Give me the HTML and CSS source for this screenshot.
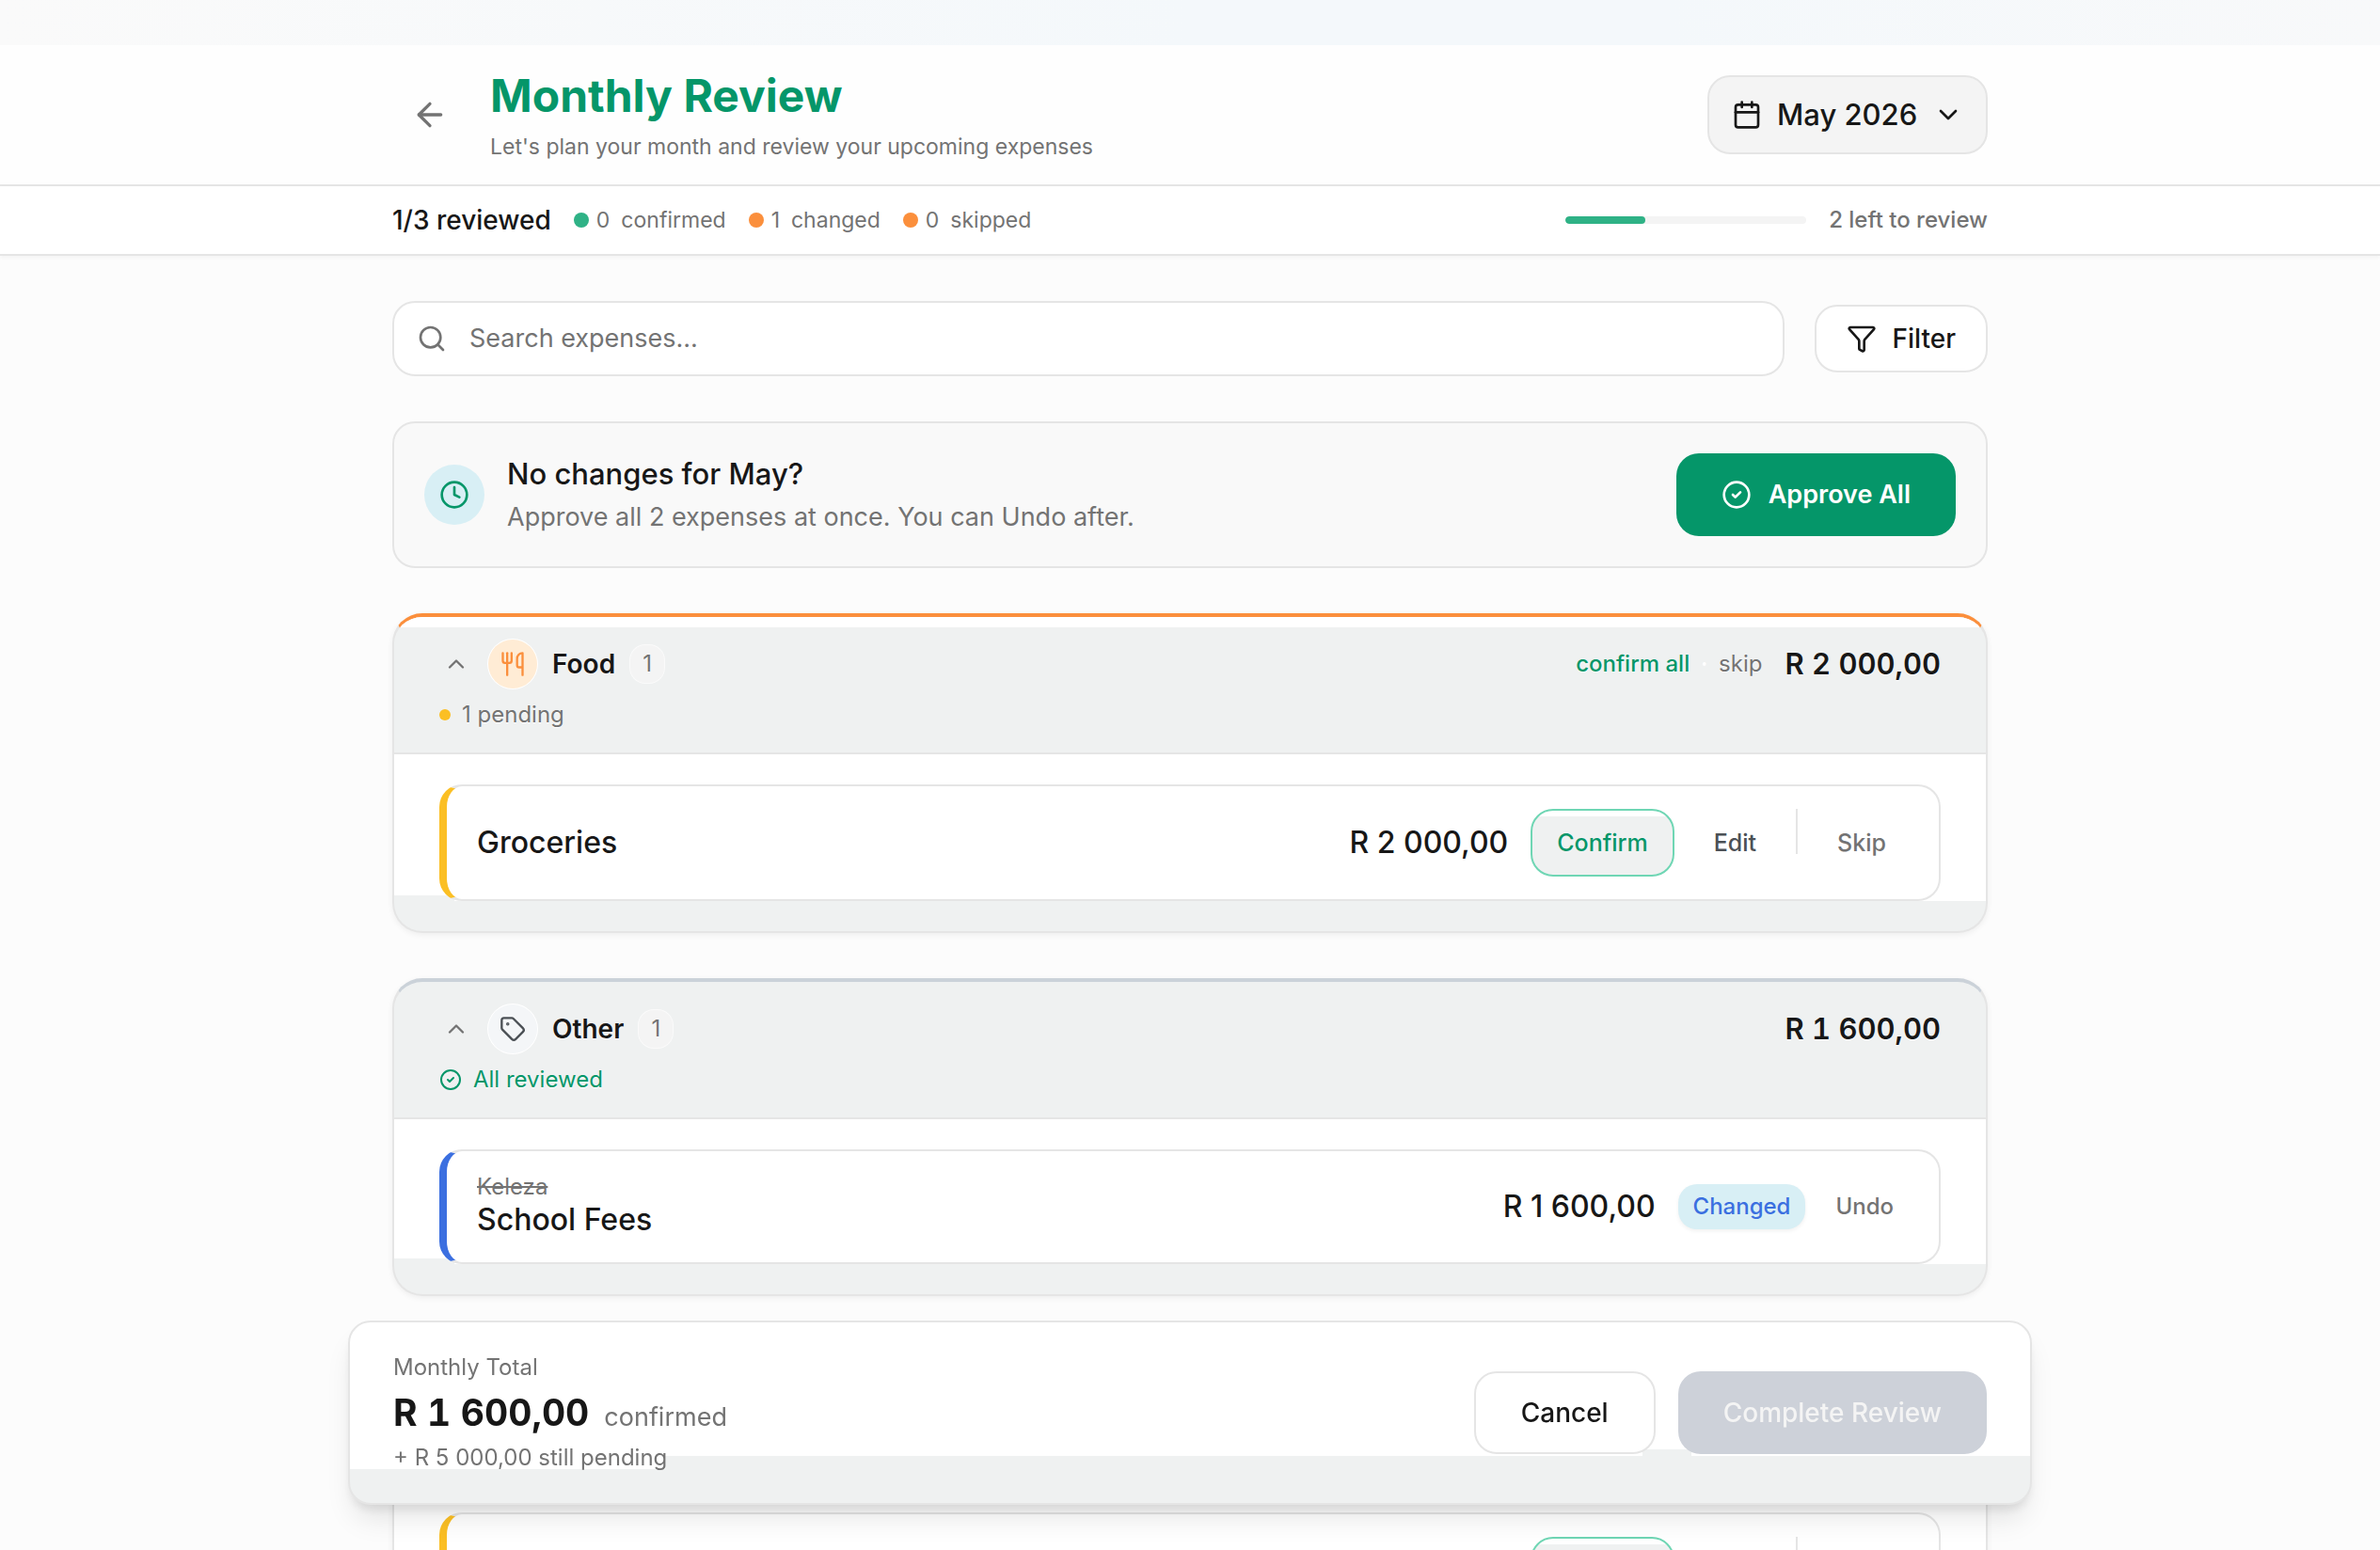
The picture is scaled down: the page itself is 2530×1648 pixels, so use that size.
FILE: index.html
```html
<!DOCTYPE html>
<html lang="en">
<head>
    <meta charset="UTF-8">
    <meta name="viewport" content="width=device-width, initial-scale=1.0">
    <title>Monthly Review</title>
    <link rel="stylesheet" href="styles.css">
</head>
<body>
    <div class="page">
        <header class="page-header">
            <div class="container header-inner">
                <button type="button" class="back-btn" aria-label="Back">
                    <svg class="icon icon-lg" viewBox="0 0 24 24"><path d="m12 19-7-7 7-7"/><path d="M19 12H5"/></svg>
                </button>
                <div class="header-text">
                    <h1>Monthly Review</h1>
                    <p>Let's plan your month and review your upcoming expenses</p>
                </div>
                <div class="month-picker">
                    <svg class="icon" viewBox="0 0 24 24"><path d="M8 2v4"/><path d="M16 2v4"/><rect width="18" height="18" x="3" y="4" rx="2"/><path d="M3 10h18"/></svg>
                    <select aria-label="Month">
                        <option>May 2026</option>
                    </select>
                    <svg class="icon" viewBox="0 0 24 24"><path d="m6 9 6 6 6-6"/></svg>
                </div>
            </div>
        </header>

        <div class="stats-bar">
            <div class="container stats-inner">
                <strong class="stats-total">1/3 reviewed</strong>
                <span class="stat"><i class="dot dot-green"></i><span>0</span><span>confirmed</span></span>
                <span class="stat"><i class="dot dot-orange"></i><span>1</span><span>changed</span></span>
                <span class="stat"><i class="dot dot-orange"></i><span>0</span><span>skipped</span></span>
                <div class="progress"><div class="progress-fill" style="width: 33%"></div></div>
                <span class="stats-left">2 left to review</span>
            </div>
        </div>

        <main class="container content">
            <div class="toolbar">
                <div class="search-box">
                    <svg class="icon" viewBox="0 0 24 24"><circle cx="11" cy="11" r="8"/><path d="m21 21-4.3-4.3"/></svg>
                    <input type="text" placeholder="Search expenses..." aria-label="Search expenses">
                </div>
                <button type="button" class="btn btn-outline btn-filter">
                    <svg class="icon" viewBox="0 0 24 24"><path d="M10 20a1 1 0 0 0 .553.895l2 1A1 1 0 0 0 14 21v-7a2 2 0 0 1 .517-1.341L21.74 4.67A1 1 0 0 0 21 3H3a1 1 0 0 0-.742 1.67l7.225 7.989A2 2 0 0 1 10 14z"/></svg>
                    Filter
                </button>
            </div>

            <section class="approve-banner">
                <span class="banner-icon">
                    <svg class="icon" viewBox="0 0 24 24"><circle cx="12" cy="12" r="10"/><path d="M12 6v6l4 2"/></svg>
                </span>
                <div class="banner-text">
                    <h2>No changes for May?</h2>
                    <p>Approve all 2 expenses at once. You can Undo after.</p>
                </div>
                <button type="button" class="btn btn-primary">
                    <svg class="icon" viewBox="0 0 24 24"><circle cx="12" cy="12" r="10"/><path d="m9 12 2 2 4-4"/></svg>
                    Approve All
                </button>
            </section>

            <section class="category category-food">
                <div class="category-header">
                    <div class="category-row">
                        <button type="button" class="toggle-btn" aria-label="Collapse Food">
                            <svg class="icon icon-md" viewBox="0 0 24 24"><path d="m18 15-6-6-6 6"/></svg>
                        </button>
                        <span class="category-icon">
                            <svg class="icon icon-md" viewBox="0 0 24 24"><path d="M3 2v7c0 1.1.9 2 2 2h4a2 2 0 0 0 2-2V2"/><path d="M7 2v20"/><path d="M21 15V2a5 5 0 0 0-5 5v6c0 1.1.9 2 2 2h3Zm0 0v7"/></svg>
                        </span>
                        <h3>Food</h3>
                        <span class="count">1</span>
                        <div class="category-actions">
                            <button type="button" class="text-btn text-btn-green">confirm all</button>
                            <span class="separator">·</span>
                            <button type="button" class="text-btn">skip</button>
                        </div>
                        <span class="category-total">R 2 000,00</span>
                    </div>
                    <div class="category-status"><i class="dot dot-pending"></i>1 pending</div>
                </div>
                <div class="category-body">
                    <div class="expense expense-pending">
                        <div class="expense-name">Groceries</div>
                        <span class="expense-amount">R 2 000,00</span>
                        <button type="button" class="row-btn row-btn-confirm">Confirm</button>
                        <button type="button" class="row-btn row-btn-edit">Edit</button>
                        <span class="divider"></span>
                        <button type="button" class="row-btn row-btn-skip">Skip</button>
                    </div>
                </div>
            </section>

            <section class="category category-other">
                <div class="category-header">
                    <div class="category-row">
                        <button type="button" class="toggle-btn" aria-label="Collapse Other">
                            <svg class="icon icon-md" viewBox="0 0 24 24"><path d="m18 15-6-6-6 6"/></svg>
                        </button>
                        <span class="category-icon">
                            <svg class="icon icon-md" viewBox="0 0 24 24"><path d="M12.586 2.586A2 2 0 0 0 11.172 2H4a2 2 0 0 0-2 2v7.172a2 2 0 0 0 .586 1.414l8.704 8.704a2.426 2.426 0 0 0 3.42 0l6.58-6.58a2.426 2.426 0 0 0 0-3.42z"/><circle cx="7.5" cy="7.5" r=".5" fill="currentColor"/></svg>
                        </span>
                        <h3>Other</h3>
                        <span class="count">1</span>
                        <span class="category-total">R 1 600,00</span>
                    </div>
                    <div class="category-status status-done">
                        <svg class="icon icon-sm" viewBox="0 0 24 24"><circle cx="12" cy="12" r="10"/><path d="m9 12 2 2 4-4"/></svg>
                        All reviewed
                    </div>
                </div>
                <div class="category-body">
                    <div class="expense expense-changed">
                        <div class="expense-name">
                            <del>Keleza</del>
                            School Fees
                        </div>
                        <span class="expense-amount">R 1 600,00</span>
                        <span class="badge">Changed</span>
                        <button type="button" class="row-btn row-btn-undo">Undo</button>
                    </div>
                </div>
            </section>

            <section class="category category-other">
                <div class="category-header"></div>
                <div class="category-body">
                    <div class="expense expense-pending">
                        <div class="expense-name"></div>
                        <button type="button" class="row-btn row-btn-confirm">Confirm</button>
                        <button type="button" class="row-btn row-btn-edit">Edit</button>
                        <span class="divider"></span>
                        <button type="button" class="row-btn row-btn-skip">Skip</button>
                    </div>
                </div>
            </section>
        </main>

        <footer class="summary-bar">
            <div class="summary-text">
                <p>Monthly Total</p>
                <p class="summary-amount"><strong>R 1 600,00</strong><span>confirmed</span></p>
                <p>+ R 5 000,00 still pending</p>
            </div>
            <button type="button" class="btn btn-outline">Cancel</button>
            <button type="button" class="btn btn-complete" disabled>Complete Review</button>
        </footer>
    </div>
</body>
</html>
```
FILE: styles.css
```css
* { box-sizing: border-box; }
body { font-family: Inter, 'Liberation Sans', sans-serif; font-size: 24px; line-height: 32px; color: #171717; background: #fcfcfc; margin: 0; }
h1, h2, h3, p { margin: 0; }
button, input, select { font: inherit; color: inherit; }
button { display: inline-flex; align-items: center; justify-content: center; border: none; background: none; padding: 0; cursor: pointer; }

.page { height: 100vh; overflow: hidden; padding-top: 48px; background: linear-gradient(90deg, #fafafa, #f4f8fb 50%, #f4f8fb 70%, #f8f9fa) top / 100% 48px no-repeat; }
.container { max-width: 1696px; margin: 0 auto; }

/* Icons */
.icon { width: 32px; height: 32px; flex: none; fill: none; stroke: currentColor; stroke-width: 2; stroke-linecap: round; stroke-linejoin: round; }
.icon-lg { width: 40px; height: 40px; }
.icon-md { width: 28px; height: 28px; }
.icon-sm { width: 24px; height: 24px; }

/* Header */
.page-header { background: #fefefe; border-bottom: 2px solid #e5e5e5; }
.header-inner { display: flex; align-items: center; min-height: 148px; }
.back-btn { width: 80px; height: 80px; margin-right: 24px; color: #737373; }
.header-text { flex: 1; font-size: 23px; color: #737373; }
.header-text h1 { font-size: 48px; line-height: 60px; font-weight: 700; color: #059669; margin-bottom: 8px; }
.month-picker { display: flex; align-items: center; height: 84px; padding: 0 24px; border: 2px solid #e5e5e5; border-radius: 24px; background: #f4f4f4; }
.month-picker select { appearance: none; border: none; background: none; margin: 0 16px; padding: 0; font-size: 31px; line-height: 40px; font-weight: 500; }

/* Progress strip */
.stats-bar { background: #fff; border-bottom: 2px solid #e5e5e5; box-shadow: 0 2px 4px rgba(0,0,0,0.04); }
.stats-inner { display: flex; align-items: center; min-height: 72px; color: #737373; }
.stats-total { font-size: 28px; font-weight: 500; color: #171717; }
.stat { display: flex; align-items: center; gap: 8px; margin-left: 24px; font-size: 23px; }
.stat span + span { margin-left: 4px; }
.dot { width: 16px; height: 16px; border-radius: 50%; flex: none; }
.dot-green { background: #2fb286; }
.dot-orange { background: #fb8f3c; }
.dot-pending { width: 12px; height: 12px; background: #fbbf24; }
.progress { width: 256px; height: 8px; margin-left: auto; border-radius: 4px; background: #f4f4f4; overflow: hidden; }
.progress-fill { height: 100%; border-radius: 4px; background: #2fb286; }
.stats-left { margin-left: 24px; font-weight: 500; }

.content { display: flex; flex-direction: column; gap: 48px; padding: 48px 0; }

/* Search and filter */
.toolbar { display: flex; align-items: center; gap: 32px; }
.search-box { flex: 1; display: flex; align-items: center; gap: 24px; height: 80px; padding: 0 24px; border: 2px solid #e5e5e5; border-radius: 24px; background: #fff; color: #737373; }
.search-box input { flex: 1; border: none; outline: none; background: none; padding: 0; font-size: 27px; color: #171717; }
.search-box input::placeholder { color: #737373; opacity: 1; }

/* Buttons */
.btn { height: 88px; padding: 0 48px; gap: 18px; border-radius: 24px; font-size: 28px; font-weight: 500; flex: none; }
.btn-outline { border: 2px solid #e5e5e5; background: #fff; }
.btn-filter { height: 72px; padding: 0 32px; gap: 16px; }
.btn-primary { background: #059669; color: #fff; font-size: 27px; font-weight: 600; }
.btn-complete { background: #cdd1d9; color: #f4f4f4; }

/* Approve all banner */
.approve-banner { display: flex; align-items: center; gap: 24px; padding: 30px 32px; border: 2px solid #e5e5e5; border-radius: 24px; background: #f9f9f9; }
.banner-icon { display: flex; align-items: center; justify-content: center; width: 64px; height: 64px; border-radius: 50%; background: #d8eff5; color: #059669; }
.banner-text { flex: 1; }
.banner-text h2 { font-size: 31px; line-height: 48px; font-weight: 500; }
.banner-text p { font-size: 27px; line-height: 44px; color: #737373; }

/* Category cards */
.category { flex: none; border: 2px solid #e5e5e5; border-top: 4px solid #cbd2d9; border-radius: 32px; background: #eff1f1; padding-bottom: 32px; overflow: hidden; box-shadow: 0 2px 6px rgba(0,0,0,0.06); }
.category-food { border-top-color: #fb8f3c; }
.category-header { min-height: 146px; padding: 24px 48px; border-bottom: 2px solid #e5e5e5; text-shadow: 0 1px 1px #fff; }
.category-food .category-header { background: linear-gradient(#fff, #fff) top / 100% 11px no-repeat; }
.category-row { display: flex; align-items: center; height: 52px; }
.category-row h3 { font-size: 28px; font-weight: 600; }
.toggle-btn { width: 36px; height: 36px; margin-right: 16px; color: #737373; }
.category-icon { display: flex; align-items: center; justify-content: center; width: 52px; height: 52px; margin-right: 16px; border-radius: 50%; background: #f4f6f8; color: #4b5055; box-shadow: 0 0 0 1px #fff; }
.category-food .category-icon { background: #ffecd5; color: #fb8f3c; }
.count { display: flex; align-items: center; justify-content: center; width: 36px; height: 40px; margin-left: 16px; border-radius: 16px; background: #f4f4f4; box-shadow: 0 0 0 1px #fafafa; color: #737373; }
.category-actions { display: flex; align-items: center; gap: 12px; margin-left: auto; }
.text-btn { color: #737373; text-shadow: inherit; }
.text-btn-green { color: #059669; font-weight: 500; }
.separator { color: #fff; }
.category-total { margin-left: auto; font-size: 31px; font-weight: 600; font-variant-numeric: tabular-nums; }
.category-actions + .category-total { margin-left: 24px; }
.category-status { display: flex; align-items: center; gap: 12px; margin-top: 12px; color: #737373; }
.status-done { color: #059669; }
.category-body { padding: 32px 48px 0; background: linear-gradient(#eff1f1, #eff1f1) left bottom / 64px 6px no-repeat, #fff; }

/* Expense rows */
.expense { display: flex; align-items: center; padding: 24px 24px 24px 32px; border: 2px solid #e5e5e5; border-left-width: 8px; border-radius: 24px; background: #fff; }
.expense-pending { border-left-color: #fbbf24; min-height: 124px; }
.expense-changed { border-left-color: #3b6fe0; }
.expense-name { flex: 1; font-size: 32px; line-height: 42px; font-weight: 500; }
.expense-name del { display: block; font-size: 24px; line-height: 28px; font-weight: 400; color: #737373; }
.expense-amount { margin-right: 24px; font-size: 32px; font-weight: 500; }
.row-btn { height: 72px; padding: 0 24px; border-radius: 24px; font-size: 25px; font-weight: 500; color: #737373; }
.row-btn-confirm { padding: 0 26px; border: 2px solid #6fd6b4; background: linear-gradient(#fff, #fff) top / 100% 6px no-repeat, #eff1f1; color: #059669; }
.row-btn-edit { margin: 0 18px; color: #4b5055; }
.divider { width: 2px; height: 48px; align-self: flex-start; background: #e5e5e5; }
.row-btn-skip { margin-left: 18px; padding-right: 32px; }
.row-btn-undo { height: 48px; margin-left: 8px; font-size: 24px; }
.badge { padding: 8px 16px; border-radius: 20px; background: #d8eff5; color: #3b6fe0; font-weight: 500; box-shadow: 0 2px 4px rgba(0,0,0,0.06); }

/* Sticky monthly summary */
.summary-bar {
    position: fixed; left: 0; right: 0; bottom: 48px;
    display: flex; align-items: center; gap: 24px;
    max-width: 1790px; margin: 0 auto; padding: 24px 46px;
    border: 2px solid #e5e5e5; border-radius: 24px;
    background:
        linear-gradient(#eff1f1, #eff1f1) bottom / 100% 36px no-repeat,
        linear-gradient(#eff1f1, #eff1f1) right bottom / calc(100% - 335px) 50px no-repeat,
        linear-gradient(#eff1f1, #eff1f1) right 360px bottom 0 / 52px 57px no-repeat,
        #fff;
    box-shadow: 0 20px 30px -6px rgba(0,0,0,0.1), 0 8px 12px -4px rgba(0,0,0,0.1);
}
.summary-text { flex: 1; line-height: 48px; color: #737373; }
.summary-amount { display: flex; align-items: baseline; gap: 16px; height: 48px; font-size: 27px; }
.summary-amount strong { font-size: 39px; font-weight: 700; color: #171717; font-variant-numeric: tabular-nums; }
```
